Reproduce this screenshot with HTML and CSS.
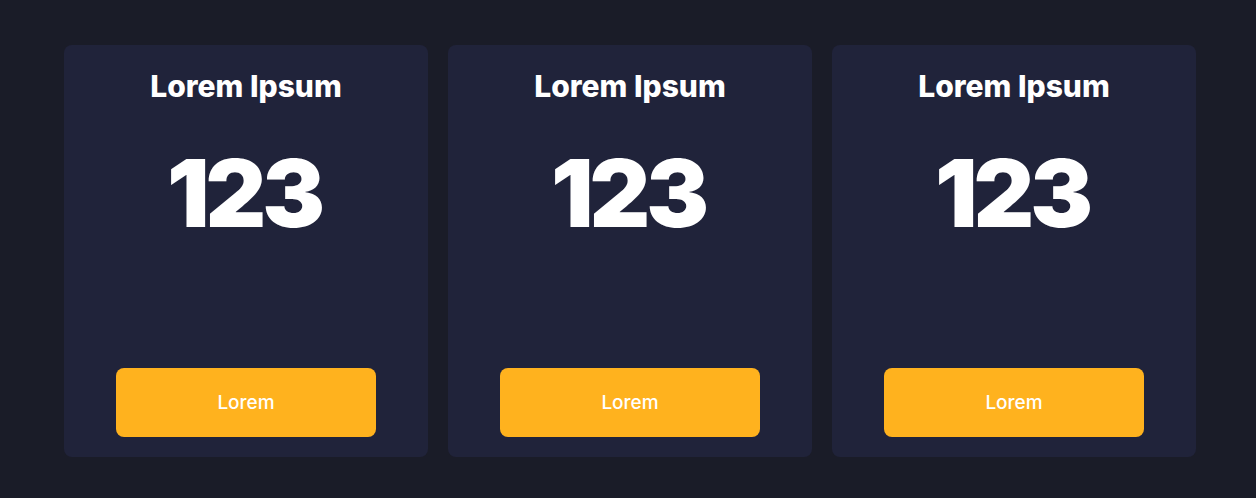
FILE: index.html
```html
<!DOCTYPE html>
<html lang="en">
<head>
<meta charset="utf-8">
<title>Cards</title>
<link rel="stylesheet" href="styles.css">
</head>
<body>
<main class="cards">
  <section class="card">
    <h2 class="card-title">Lorem Ipsum</h2>
    <div class="card-number">123</div>
    <button class="card-button">Lorem</button>
  </section>
  <section class="card">
    <h2 class="card-title">Lorem Ipsum</h2>
    <div class="card-number">123</div>
    <button class="card-button">Lorem</button>
  </section>
  <section class="card">
    <h2 class="card-title">Lorem Ipsum</h2>
    <div class="card-number">123</div>
    <button class="card-button">Lorem</button>
  </section>
</main>
</body>
</html>
```
FILE: styles.css
```css
html, body {
  margin: 0;
  padding: 0;
  background: #1a1c28;
  font-family: Inter, "Noto Sans", sans-serif;
  color: #ffffff;
}
.cards {
  display: flex;
  gap: 20px;
  padding: 45px 60px 41px 64px;
}
.card {
  width: 364px;
  height: 412px;
  box-sizing: border-box;
  background: #20233a;
  border-radius: 8px;
  display: flex;
  flex-direction: column;
  align-items: center;
  padding: 0 0 20px;
}
.card-title {
  margin: 23px 0 0;
  font-size: 30px;
  line-height: 36px;
  font-weight: 800;
  letter-spacing: 0;
}
.card-number {
  margin-top: 39px;
  padding-right: 4px;
  font-size: 94px;
  line-height: 100px;
  font-weight: 900;
  letter-spacing: -4px;
}
.card-button {
  margin-top: auto;
  width: 260px;
  height: 69px;
  border: none;
  border-radius: 8px;
  background: #ffb21e;
  color: #ffffff;
  font-family: Inter, "Noto Sans", sans-serif;
  font-size: 19px;
  font-weight: 500;
  cursor: pointer;
}
```
